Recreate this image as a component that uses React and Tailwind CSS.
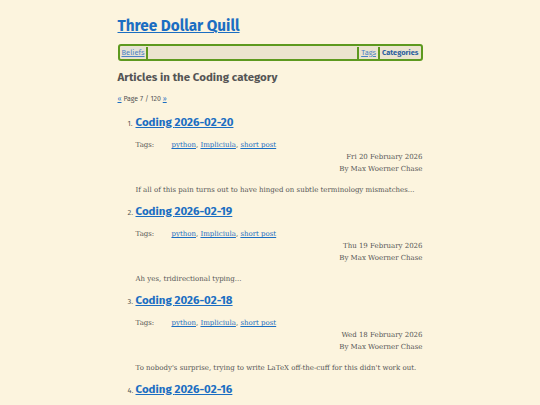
const posts = [
  { date: '2026-02-20', day: 'Fri 20 February 2026', excerpt: 'If all of this pain turns out to have hinged on subtle terminology mismatches...' },
  { date: '2026-02-19', day: 'Thu 19 February 2026', excerpt: 'Ah yes, tridirectional typing...' },
  { date: '2026-02-18', day: 'Wed 18 February 2026', excerpt: "To nobody's surprise, trying to write LaTeX off-the-cuff for this didn't work out." },
  { date: '2026-02-16', day: 'Mon 16 February 2026', excerpt: '...' },
];

const head = "font-['Fira_Sans',Lato,'Noto_Sans',sans-serif]";
const body = "font-['Roboto_Slab','DejaVu_Serif',serif]";

function Post({ post, n }) {
  return (
    <li className="relative pl-[18px]">
      <span className={`absolute left-[10px] top-[8px] text-[7.5px] text-[#555] ${head}`}>{n}.</span>
      <h2 className={`h-[24px] text-[11.5px] font-bold leading-[24px] ${head}`}>
        <a href="#" className="text-[#1b6ec2] underline">Coding {post.date}</a>
      </h2>
      <div className={`${body} whitespace-nowrap text-[7px] text-[#555]`}>
        <div className="mt-[6px] flex h-[12px] items-center">
          <span className="w-[36px]">Tags:</span>
          <span>
            <a href="#" className="text-[#1b6ec2] underline">python</a>,{' '}
            <a href="#" className="text-[#1b6ec2] underline">Impliciula</a>,{' '}
            <a href="#" className="text-[#1b6ec2] underline">short post</a>
          </span>
        </div>
        <div className="flex h-[12px] items-center justify-end">{post.day}</div>
        <div className="flex h-[12px] items-center justify-end">By Max Woerner Chase</div>
        <p className="mt-[9px] flex h-[12px] items-center">{post.excerpt}</p>
      </div>
      <div className="h-[2px]" />
    </li>
  );
}

export default function App() {
  return (
    <div className="h-[405px] w-[540px] overflow-hidden bg-[#fcf4de]">
      <div className="mx-auto w-[305px] pt-[13px]">
        <h1 className={`h-[26px] text-[15.3px] font-bold leading-[26px] ${head}`}>
          <a href="#" className="text-[#1b6ec2] underline">Three Dollar Quill</a>
        </h1>
        <nav className={`mt-[5px] flex h-[17px] items-center rounded-[3px] border-2 border-[#5d991f] bg-[#ebe4cf] px-[2px] text-[7.5px] ${head}`}>
          <a href="#" className="bg-[#e4e2d6] text-[#4b83c4] underline">Beliefs</a>
          <span className="ml-[1px] h-[12px] w-[2px] bg-[#5d991f]" />
          <span className="flex-1" />
          <span className="mr-[2px] h-[12px] w-[2px] bg-[#5d991f]" />
          <a href="#" className="text-[#4b83c4] underline">Tags</a>
          <span className="mx-[2px] h-[12px] w-[2px] bg-[#5d991f]" />
          <a href="#" className="font-bold text-[#2c5f9e]">Categories</a>
        </nav>
        <h2 className={`mt-[6px] h-[20px] text-[11.5px] font-bold leading-[20px] text-[#555] ${head}`}>
          Articles in the Coding category
        </h2>
        <div className={`mt-[7px] text-[7px] text-[#555] ${head}`}>
          <a href="#" className="text-[#1b6ec2] underline">«</a> Page 7 / 120{' '}
          <a href="#" className="text-[#1b6ec2] underline">»</a>
        </div>
        <ol className="mt-[5px]">
          {posts.map((p, i) => (
            <Post key={p.date} post={p} n={i + 1} />
          ))}
        </ol>
      </div>
    </div>
  );
}
